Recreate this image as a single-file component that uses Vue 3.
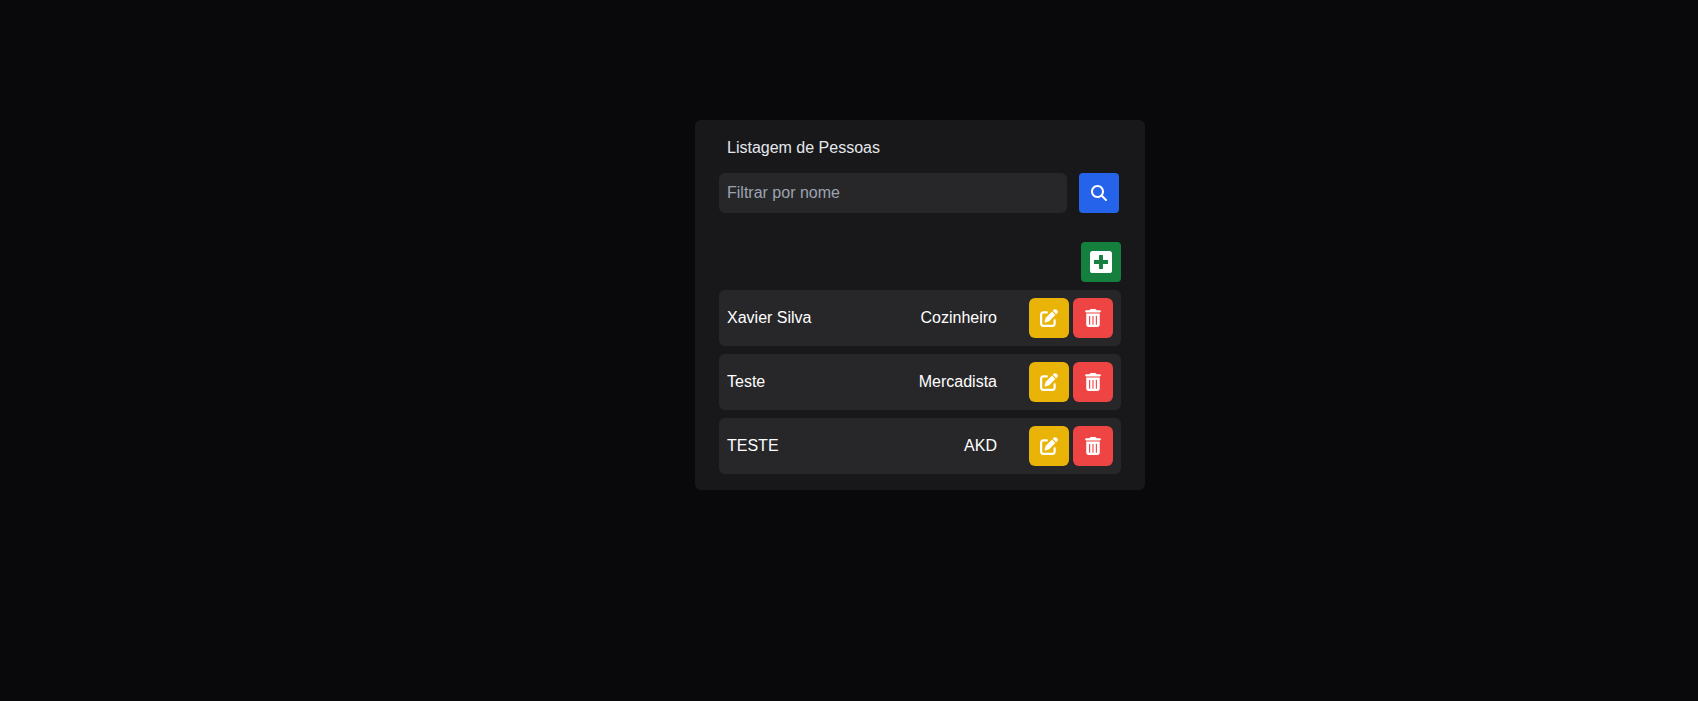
<script setup>
import { computed, ref } from 'vue'

const people = [
  { id: 1, name: 'Xavier Silva', job: 'Cozinheiro' },
  { id: 2, name: 'Teste', job: 'Mercadista' },
  { id: 3, name: 'TESTE', job: 'AKD' },
]

const draft = ref('')
const filter = ref('')

const visible = computed(() =>
  people.filter((p) => p.name.toLowerCase().includes(filter.value.toLowerCase()))
)

function search() {
  filter.value = draft.value.trim()
}
</script>

<template>
  <main class="page">
    <section class="card">
      <h1 class="title"><label for="name-filter">Listagem de Pessoas</label></h1>

      <form class="search" @submit.prevent="search">
        <input id="name-filter" v-model="draft" class="field" type="text" placeholder="Filtrar por nome" />
        <button class="btn btn-search" type="submit" aria-label="Buscar">
          <svg width="16" height="16" viewBox="0 0 512 512" fill="currentColor" aria-hidden="true">
            <path d="M416 208c0 45.900-14.900 88.300-40 122.700L502.600 457.400c12.500 12.500 12.500 32.800 0 45.300s-32.800 12.500-45.300 0L330.700 376c-34.400 25.200-76.800 40-122.700 40C93.100 416 0 322.900 0 208S93.100 0 208 0S416 93.100 416 208zM208 352a144 144 0 1 0 0-288 144 144 0 1 0 0 288z" />
          </svg>
        </button>
      </form>

      <div class="toolbar">
        <button class="btn btn-add" type="button" aria-label="Adicionar">
          <svg width="22" height="26" viewBox="0 0 448 512" fill="currentColor" aria-hidden="true">
            <path d="M400 32H48C21.500 32 0 53.500 0 80v352c0 26.500 21.500 48 48 48h352c26.500 0 48-21.500 48-48V80c0-26.500-21.500-48-48-48zm-32 252c0 6.600-5.400 12-12 12h-92v92c0 6.600-5.400 12-12 12h-56c-6.600 0-12-5.400-12-12v-92H92c-6.600 0-12-5.400-12-12v-56c0-6.600 5.400-12 12-12h92v-92c0-6.600 5.400-12 12-12h56c6.600 0 12 5.400 12 12v92h92c6.600 0 12 5.400 12 12v56z" />
          </svg>
        </button>
      </div>

      <ul class="list">
        <li v-for="person in visible" :key="person.id" class="item">
          <span class="name">{{ person.name }}</span>
          <span class="job">{{ person.job }}</span>
          <div class="actions">
            <button class="btn btn-edit" type="button" aria-label="Editar">
              <svg width="18" height="18" viewBox="0 0 512 512" fill="currentColor" aria-hidden="true">
                <path d="M471.600 21.700c-21.900-21.900-57.300-21.900-79.200 0L362.300 51.700l97.900 97.900 30.100-30.100c21.900-21.900 21.900-57.300 0-79.200L471.600 21.700zm-299.200 220c-6.100 6.100-10.800 13.600-13.500 21.900l-29.600 88.800c-2.900 8.600-.6 18.100 5.800 24.600s15.900 8.700 24.600 5.800l88.800-29.600c8.200-2.700 15.700-7.400 21.900-13.500L437.700 172.300 339.700 74.300 172.400 241.700zM96 64C43 64 0 107 0 160V416c0 53 43 96 96 96H352c53 0 96-43 96-96V320c0-17.700-14.300-32-32-32s-32 14.300-32 32v96c0 17.700-14.300 32-32 32H96c-17.700 0-32-14.300-32-32V160c0-17.700 14.300-32 32-32h96c17.700 0 32-14.300 32-32s-14.300-32-32-32H96z" />
              </svg>
            </button>
            <button class="btn btn-delete" type="button" aria-label="Excluir">
              <svg width="18" height="18" viewBox="0 0 448 512" fill="currentColor" aria-hidden="true">
                <path d="M135.200 17.700C140.600 6.800 151.700 0 163.800 0H284.200c12.100 0 23.200 6.800 28.600 17.700L320 32h96c17.700 0 32 14.300 32 32s-14.300 32-32 32H32C14.300 96 0 81.700 0 64S14.300 32 32 32h96l7.200-14.300zM32 128H416V448c0 35.300-28.700 64-64 64H96c-35.300 0-64-28.700-64-64V128zm96 64c-8.800 0-16 7.200-16 16V432c0 8.800 7.200 16 16 16s16-7.200 16-16V208c0-8.800-7.200-16-16-16zm96 0c-8.800 0-16 7.200-16 16V432c0 8.800 7.200 16 16 16s16-7.200 16-16V208c0-8.800-7.200-16-16-16zm96 0c-8.800 0-16 7.200-16 16V432c0 8.800 7.200 16 16 16s16-7.200 16-16V208c0-8.800-7.200-16-16-16z" />
              </svg>
            </button>
          </div>
        </li>
      </ul>
    </section>
  </main>
</template>

<style>
body {
  background: #09090b;
}
</style>

<style scoped>
* {
  box-sizing: border-box;
}

.page {
  display: flex;
  justify-content: center;
  align-items: flex-start;
  padding: 120px 0 24px 142px;
  color: #fff;
  font-family: "Liberation Sans", Arial, sans-serif;
  font-size: 16px;
  line-height: 24px;
}

.card {
  width: 100%;
  max-width: 450px;
  padding: 16px 24px;
  border-radius: 6px;
  background: #18181b;
}

.title {
  margin: 0 8px 13px;
  color: #e5e7eb;
  font-size: 16px;
  font-weight: 400;
}

.search {
  display: flex;
  gap: 12px;
  margin-right: 2px;
}

.field {
  flex: 1;
  min-width: 0;
  height: 40px;
  padding: 0 8px;
  border: 0;
  border-radius: 6px;
  background: #27272a;
  color: #fff;
  font: inherit;
}

.field::placeholder {
  color: #9ca3af;
  opacity: 1;
}

.btn {
  display: flex;
  flex: none;
  align-items: center;
  justify-content: center;
  width: 40px;
  height: 40px;
  padding: 0;
  border: 0;
  border-radius: 6px;
  color: #fff;
  cursor: pointer;
}

.btn-search {
  border-radius: 4px;
  background: #2563eb;
}

.btn-add {
  border-radius: 4px;
  background: #15803d;
}

.btn-edit {
  background: #eab308;
}

.btn-delete {
  background: #ef4444;
}

.toolbar {
  display: flex;
  justify-content: flex-end;
  margin: 29px 0 8px;
}

.list {
  display: flex;
  flex-direction: column;
  gap: 8px;
  margin: 0;
  padding: 0;
  list-style: none;
}

.item {
  display: flex;
  align-items: center;
  padding: 8px;
  border-radius: 6px;
  background: #27272a;
}

.name {
  flex: 1;
}

.job {
  text-align: right;
}

.actions {
  display: flex;
  gap: 4px;
  margin-left: 32px;
}
</style>
